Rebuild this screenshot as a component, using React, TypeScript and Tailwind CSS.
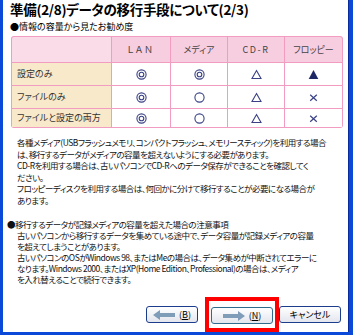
import React from "react";

const jp = "font-['Noto_Sans_CJK_JP','Noto_Sans',sans-serif] [font-feature-settings:'palt']";

type Mark = "double" | "circle" | "tri" | "triFill" | "cross";

const Symbol: React.FC<{ kind: Mark }> = ({ kind }) => {
  const c = "#3a4285";
  return (
    <svg width="11" height="11" viewBox="0 0 11 11">
      {kind === "double" && (
        <>
          <circle cx="5.5" cy="5.5" r="4.6" fill="none" stroke={c} strokeWidth="1.1" />
          <circle cx="5.5" cy="5.5" r="2.3" fill="none" stroke={c} strokeWidth="1.1" />
        </>
      )}
      {kind === "circle" && <circle cx="5.5" cy="5.5" r="4.6" fill="none" stroke={c} strokeWidth="1.1" />}
      {kind === "tri" && <polygon points="5.5,1.5 10,9.5 1,9.5" fill="none" stroke={c} strokeWidth="1.1" />}
      {kind === "triFill" && <polygon points="5.5,1 10.3,10 0.7,10" fill="#1e2766" />}
      {kind === "cross" && (
        <path d="M2.2 2.7 L8.8 8.8 M8.8 2.7 L2.2 8.8" stroke={c} strokeWidth="1.2" fill="none" />
      )}
    </svg>
  );
};

const rows: { label: string; marks: Mark[]; h: string }[] = [
  { label: "設定のみ", marks: ["double", "double", "tri", "triFill"], h: "h-[22px]" },
  { label: "ファイルのみ", marks: ["double", "circle", "tri", "cross"], h: "h-[22px]" },
  { label: "ファイルと設定の両方", marks: ["double", "circle", "tri", "cross"], h: "h-[18px]" },
];

const headers = ["ＬＡＮ", "メディア", "CD-R", "フロッピー"];

const para1 = [
  "各種メディア(USBフラッシュメモリ、コンパクトフラッシュ、メモリースティック)を利用する場合",
  "は、移行するデータがメディアの容量を超えないようにする必要があります。",
  "CD-Rを利用する場合は、古いパソコンでCD-Rへのデータ保存ができることを確認してく",
  "ださい。",
  "フロッピーディスクを利用する場合は、何回かに分けて移行することが必要になる場合が",
  "あります。",
];

const para2 = [
  "古いパソコンから移行するデータを集めている途中で、データ容量が記録メディアの容量",
  "を超えてしまうことがあります。",
  "古いパソコンのOSがWindows 98、またはMeの場合は、データ集めが中断されてエラーに",
  "なります。Windows 2000、またはXP(Home Edition、Professional)の場合は、メディア",
  "を入れ替えることで続行できます。",
];

const LeftArrow = () => (
  <svg width="22" height="10" viewBox="0 0 22 10">
    <polygon points="0,5 7,0 7,3 22,3 22,7 7,7 7,10" fill="#7f9cb8" />
  </svg>
);

const RightArrow = () => (
  <svg width="22" height="10" viewBox="0 0 22 10">
    <polygon points="22,5 15,0 15,3 0,3 0,7 15,7 15,10" fill="#7f9cb8" />
  </svg>
);

const btn =
  "h-[17px] rounded-[3px] border bg-gradient-to-b from-white to-[#e4e6ee] flex items-center justify-center gap-[4px] text-[9px] text-black";

const body = "text-[8.5px] text-[#111] tracking-[-0.5px] whitespace-nowrap";

export default function App() {
  return (
    <div className={`w-[353px] h-[335px] bg-[#0b4ad8] pl-[3px] pr-[4px] pb-[3px] flex ${jp}`}>
      <div className="flex-1 min-w-0 overflow-hidden bg-white flex flex-col border-r border-[#0a2a9a]">
        <div className="pl-[7px] pt-[1px] text-[13.5px] leading-[16px] font-bold text-black tracking-[-0.3px] whitespace-nowrap">
          準備(2/8)データの移行手段について(2/3)
        </div>
        <div className="pl-[7px] mt-[4px] text-[9px] leading-[11px] text-black whitespace-nowrap">
          ●情報の容量から見たお勧め度
        </div>

        <div className="ml-[8px] mt-[4px] w-[332px] bg-[#f19cc0] p-px grid grid-cols-[99px_58px_56px_56px_57px] gap-px rounded-[3px]">
          <div className="h-[25px] bg-[#fadbe8] rounded-tl-[2px]" />
          {headers.map((h, i) => (
            <div
              key={h}
              className={`h-[25px] bg-[#f7cde0] flex items-center justify-center text-[9px] text-[#444] ${
                i === 0 ? "tracking-[2px]" : i === 2 ? "tracking-[1.5px]" : ""
              } ${i === 3 ? "rounded-tr-[2px]" : ""}`}
            >
              {h}
            </div>
          ))}
          {rows.map((r) => (
            <React.Fragment key={r.label}>
              <div className={`${r.h} bg-[#f9e9cb] flex items-center pl-[5px] text-[9px] text-[#333] whitespace-nowrap`}>
                {r.label}
              </div>
              {r.marks.map((m, j) => (
                <div key={j} className={`${r.h} bg-white flex items-center justify-center`}>
                  <Symbol kind={m} />
                </div>
              ))}
            </React.Fragment>
          ))}
        </div>

        <div className={`pl-[14px] mt-[9px] leading-[11.5px] ${body}`}>
          {para1.map((l) => (
            <div key={l}>{l}</div>
          ))}
        </div>

        <div className={`mt-[13px] leading-[11px] ${body}`}>
          <div className="pl-[4px]">●移行するデータが記録メディアの容量を超えた場合の注意事項</div>
          <div className="pl-[14px]">
            {para2.map((l) => (
              <div key={l}>{l}</div>
            ))}
          </div>
        </div>

        <div className="mt-auto flex justify-end items-center pr-[7px]">
          <button className={`${btn} w-[52px] border-[#1c3c8c]`}>
            <LeftArrow />
            <span>
              (<span className="underline">B</span>)
            </span>
          </button>
          <div className="ml-[7px] border-[4px] border-[#ff0000] px-[2px] pt-[6px] pb-[4px]">
            <button className={`${btn} w-[62px] border-[#2f6b8c]`}>
              <RightArrow />
              <span>
                (<span className="underline">N</span>)
              </span>
            </button>
          </div>
          <button className={`${btn} w-[62px] border-[#1c3c8c]`}>キャンセル</button>
        </div>
      </div>
    </div>
  );
}
